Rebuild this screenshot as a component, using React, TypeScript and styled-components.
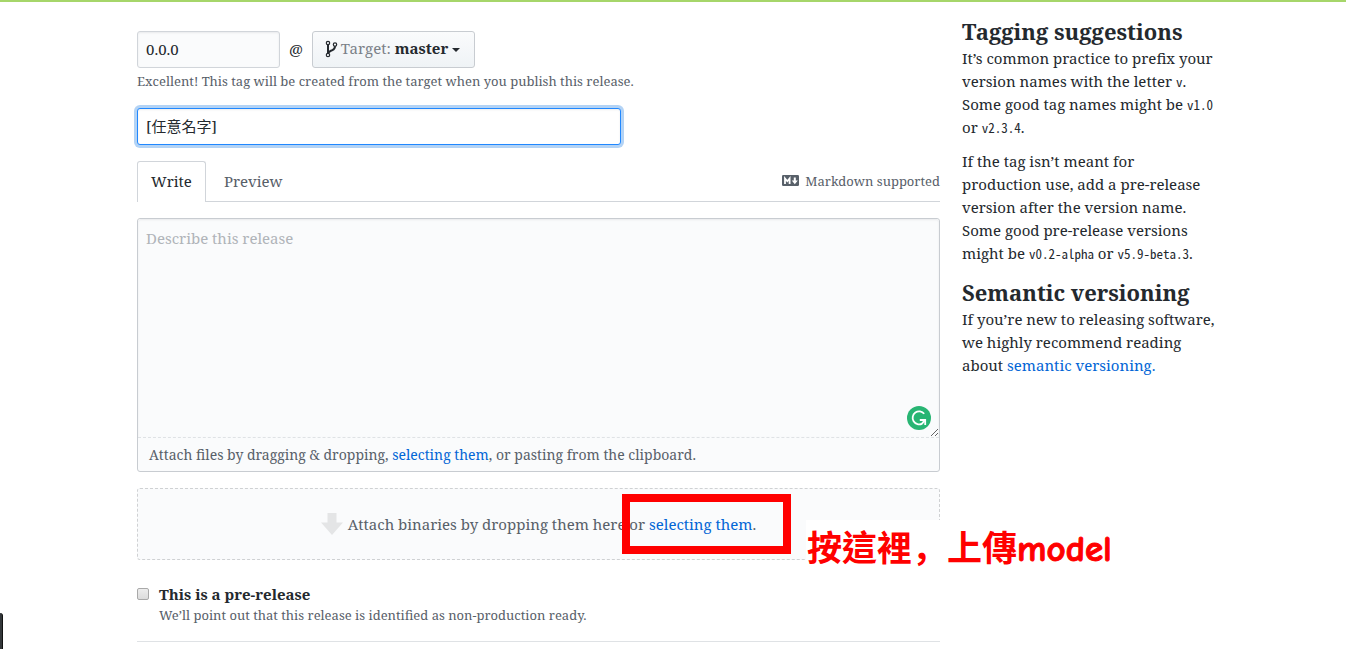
import React from "react";
import styled, { createGlobalStyle } from "styled-components";

const serif = `"Noto Serif", "DejaVu Serif", "Noto Sans CJK TC", serif`;

const GlobalStyle = createGlobalStyle`
  *, *::before, *::after { box-sizing: border-box; }
  body {
    margin: 0;
    background: #fff;
    color: #24292e;
    font-family: ${serif};
    font-size: 15px;
    line-height: 23px;
  }
  input, button, textarea { font: inherit; color: inherit; }
`;

const Page = styled.div`
  border-top: 2px solid #a6d66a;
  padding-left: 8px;
  overflow: hidden;
`;

const Container = styled.div`
  display: flex;
  gap: 22px;
  max-width: 1080px;
  margin: 0 auto;
`;

const Main = styled.form`
  flex: 1;
  min-width: 0;
  padding-top: 29px;
`;

const Aside = styled.aside`
  flex: 0 0 255px;
  padding-top: 14px;
`;

const TagRow = styled.div`
  display: flex;
  align-items: center;
  gap: 9px;
`;

const TextInput = styled.input<{ $width: string; $active?: boolean }>`
  width: ${(p) => p.$width};
  height: 37px;
  padding: 0 8px 2px;
  border: 1px solid ${(p) => (p.$active ? "#2188ff" : "#d1d5da")};
  border-radius: 3px;
  outline: none;
  background: ${(p) => (p.$active ? "#fff" : "#fafbfc")};
  box-shadow: inset 0 1px 2px rgba(27, 31, 35, 0.075)
    ${(p) => (p.$active ? ", 0 0 0 3px #b3d3f5" : "")};
`;

const TargetButton = styled.button`
  display: flex;
  align-items: center;
  width: 163px;
  height: 37px;
  padding: 0 12px 2px;
  border: 1px solid #c8ccd1;
  border-radius: 3px;
  background: linear-gradient(#fafbfc, #eff3f6);
  white-space: nowrap;
`;

const TargetLabel = styled.span`
  margin: 0 4px 0 3px;
  color: #7b8188;
`;

const Caret = styled.span`
  margin: 2px 0 0 4px;
  border: 4px solid transparent;
  border-top-color: #24292e;
  border-bottom: 0;
`;

const Note = styled.p`
  margin: 0;
  color: #586069;
  font-size: 13px;
  line-height: 20px;
`;

const TagNote = styled(Note)`
  margin: 3px 0 17px;
`;

const Tabs = styled.div`
  display: flex;
  align-items: center;
  height: 41px;
  margin: 16px 0;
  border-bottom: 1px solid #d1d5da;
`;

const Tab = styled.button<{ $selected?: boolean }>`
  height: 41px;
  padding: 0 13px;
  border: 1px solid ${(p) => (p.$selected ? "#d1d5da" : "transparent")};
  border-bottom: 0;
  border-radius: 3px 3px 0 0;
  background: ${(p) => (p.$selected ? "#fff" : "transparent")};
  color: ${(p) => (p.$selected ? "#24292e" : "#586069")};
  & + & { margin-left: 4px; }
`;

const MarkdownLink = styled.a`
  display: flex;
  align-items: center;
  gap: 6px;
  margin-left: auto;
  color: #586069;
  font-size: 13px;
  text-decoration: none;
`;

const Link = styled.a`
  color: #0366d6;
  text-decoration: none;
`;

const Editor = styled.div`
  position: relative;
  border: 1px solid #c8ccd1;
  border-radius: 3px;
  background: #fafbfc;
`;

const Description = styled.textarea`
  display: block;
  width: 100%;
  height: 219px;
  padding: 8px;
  border: 0;
  border-bottom: 1px dashed #dfe2e5;
  border-radius: 3px 3px 0 0;
  outline: none;
  background: #fafbfc;
  box-shadow: inset 0 1px 2px rgba(27, 31, 35, 0.075);
  resize: vertical;
  &::placeholder { color: #b0b4b9; }
`;

const CheckerBadge = styled.svg`
  position: absolute;
  top: 187px;
  right: 8px;
`;

const AttachHint = styled.p`
  margin: 0;
  padding: 5px 11px;
  color: #586069;
  font-size: 14px;
`;

const DropZone = styled.div`
  position: relative;
  display: flex;
  align-items: center;
  justify-content: center;
  gap: 5px;
  height: 72px;
  margin-top: 16px;
  border: 1px dashed #cfd1d3;
  border-radius: 3px;
  background: #fafbfc;
  color: #586069;
`;

const LinkTarget = styled.span`
  position: relative;
`;

const RedFrame = styled.span`
  position: absolute;
  top: -20px;
  left: -27px;
  width: 169px;
  height: 60px;
  border: 8px solid #f00;
  pointer-events: none;
`;

const Callout = styled.span`
  position: absolute;
  top: 31px;
  left: 668px;
  height: 52px;
  padding-left: 1px;
  background: #fff;
  color: #f00;
  font-family: "Noto Sans CJK TC", sans-serif;
  font-size: 35px;
  font-weight: 700;
  line-height: 52px;
  white-space: nowrap;
`;

const CalloutComma = styled.span`
  font-family: "Noto Sans CJK SC", sans-serif;
`;

const CalloutLatin = styled.span`
  font-family: "Comic Neue", "Comic Sans MS", Lato, sans-serif;
  font-size: 37px;
  -webkit-text-stroke: 1px #f00;
`;

const PreRelease = styled.div`
  display: grid;
  grid-template-columns: 12px 1fr;
  column-gap: 10px;
  margin-top: 23px;
  padding-bottom: 16px;
  border-bottom: 1px solid #dfe2e5;
`;

const Checkbox = styled.input`
  appearance: none;
  width: 12px;
  height: 12px;
  margin: 5px 0;
  border: 1px solid #a9a9a9;
  border-radius: 2px;
  background: linear-gradient(#ededed, #dcdcdc);
`;

const PreReleaseLabel = styled.label`
  font-weight: 700;
  line-height: 22px;
`;

const PreReleaseNote = styled(Note)`
  grid-column: 2;
`;

const Heading = styled.h2`
  margin: 0;
  font-size: 22px;
  line-height: 31px;
`;

const Paragraph = styled.p`
  margin: 0 0 11px;
  white-space: nowrap;
  & + h2 { margin-top: 12px; }
`;

const Code = styled.code`
  font-family: "Noto Sans Mono CJK SC", "Noto Sans Mono CJK TC", "Liberation Mono", monospace;
  font-size: 13px;
  line-height: 1;
`;

const EdgeHandle = styled.div`
  position: fixed;
  left: 0;
  bottom: 0;
  width: 3px;
  height: 36px;
  border-right: 1px solid #111;
  border-radius: 0 3px 0 0;
  background: #33373a;
`;

const BranchIcon = () => (
  <svg width="13" height="18" viewBox="0 0 13 18" fill="none" stroke="#24292e" aria-hidden="true">
    <circle cx="3" cy="3" r="1.7" strokeWidth="1.2" />
    <circle cx="10" cy="4.6" r="1.7" strokeWidth="1.2" />
    <circle cx="3" cy="15" r="1.7" strokeWidth="1.2" />
    <path d="M3 4.8v8.4" strokeWidth="2" />
    <path d="M10 6.3c0 2.2-.8 3-2.6 3.8-2 .9-3.6 1.2-4 3" strokeWidth="2" />
  </svg>
);

const MarkdownIcon = () => (
  <svg width="17" height="12" viewBox="0 0 17 12" aria-hidden="true">
    <rect width="17" height="11" rx="1.2" fill="#586069" />
    <path d="M3 9V3.4l2.3 2.8 2.3-2.8V9" fill="none" stroke="#fff" strokeWidth="1.8" />
    <path d="M11.8 2.4v3H9.8l3 3.9 3-3.9h-2v-3z" fill="#fff" />
  </svg>
);

const ArrowIcon = () => (
  <svg width="22" height="22" viewBox="0 0 22 22" aria-hidden="true">
    <path d="M6.5 0h9v9.5H22L11 22 0 9.5h6.5z" fill="#e4e5e6" />
  </svg>
);

export default function App() {
  return (
    <>
      <GlobalStyle />
      <Page>
        <Container>
          <Main onSubmit={(e) => e.preventDefault()}>
            <TagRow>
              <TextInput $width="143px" defaultValue="0.0.0" aria-label="Tag version" />
              <span>@</span>
              <TargetButton type="button">
                <BranchIcon />
                <TargetLabel>Target:</TargetLabel>
                <strong>master</strong>
                <Caret />
              </TargetButton>
            </TagRow>
            <TagNote>
              Excellent! This tag will be created from the target when you publish this release.
            </TagNote>
            <TextInput $width="484px" $active defaultValue="[任意名字]" aria-label="Release title" />

            <Tabs>
              <Tab type="button" $selected>Write</Tab>
              <Tab type="button">Preview</Tab>
              <MarkdownLink href="#markdown">
                <MarkdownIcon />
                Markdown supported
              </MarkdownLink>
            </Tabs>

            <Editor>
              <Description placeholder="Describe this release" aria-label="Release description" />
              <CheckerBadge width="24" height="24" viewBox="0 0 24 24" aria-hidden="true">
                <circle cx="12" cy="12" r="12" fill="#28b573" />
                <path d="M17.2 7.8A6.5 6.5 0 1 0 15.2 17.6" fill="none" stroke="#fff" strokeWidth="1.8" />
                <path d="M12.8 14h5.4v5" fill="none" stroke="#fff" strokeWidth="1.8" />
                <path d="M17.6 14.4l-2.6 3.4" fill="none" stroke="#fff" strokeWidth="1.8" />
              </CheckerBadge>
              <AttachHint>
                Attach files by dragging &amp; dropping, <Link href="#files">selecting them</Link>, or
                pasting from the clipboard.
              </AttachHint>
            </Editor>

            <DropZone>
              <ArrowIcon />
              <span>
                Attach binaries by dropping them here or{" "}
                <LinkTarget>
                  <Link href="#binaries">selecting them</Link>
                  <RedFrame />
                </LinkTarget>
                .
              </span>
              <Callout>
                按這裡<CalloutComma>，</CalloutComma>上傳<CalloutLatin>model</CalloutLatin>
              </Callout>
            </DropZone>

            <PreRelease>
              <Checkbox type="checkbox" id="prerelease" />
              <PreReleaseLabel htmlFor="prerelease">This is a pre-release</PreReleaseLabel>
              <PreReleaseNote>
                We’ll point out that this release is identified as non-production ready.
              </PreReleaseNote>
            </PreRelease>
          </Main>

          <Aside>
            <Heading>Tagging suggestions</Heading>
            <Paragraph>
              It’s common practice to prefix your<br />
              version names with the letter <Code>v</Code>.<br />
              Some good tag names might be <Code>v1.0</Code><br />
              or <Code>v2.3.4</Code>.
            </Paragraph>
            <Paragraph>
              If the tag isn’t meant for<br />
              production use, add a pre-release<br />
              version after the version name.<br />
              Some good pre-release versions<br />
              might be <Code>v0.2-alpha</Code> or <Code>v5.9-beta.3</Code>.
            </Paragraph>
            <Heading>Semantic versioning</Heading>
            <Paragraph>
              If you’re new to releasing software,<br />
              we highly recommend reading<br />
              about <Link href="#semver">semantic versioning.</Link>
            </Paragraph>
          </Aside>
        </Container>
      </Page>
      <EdgeHandle />
    </>
  );
}
